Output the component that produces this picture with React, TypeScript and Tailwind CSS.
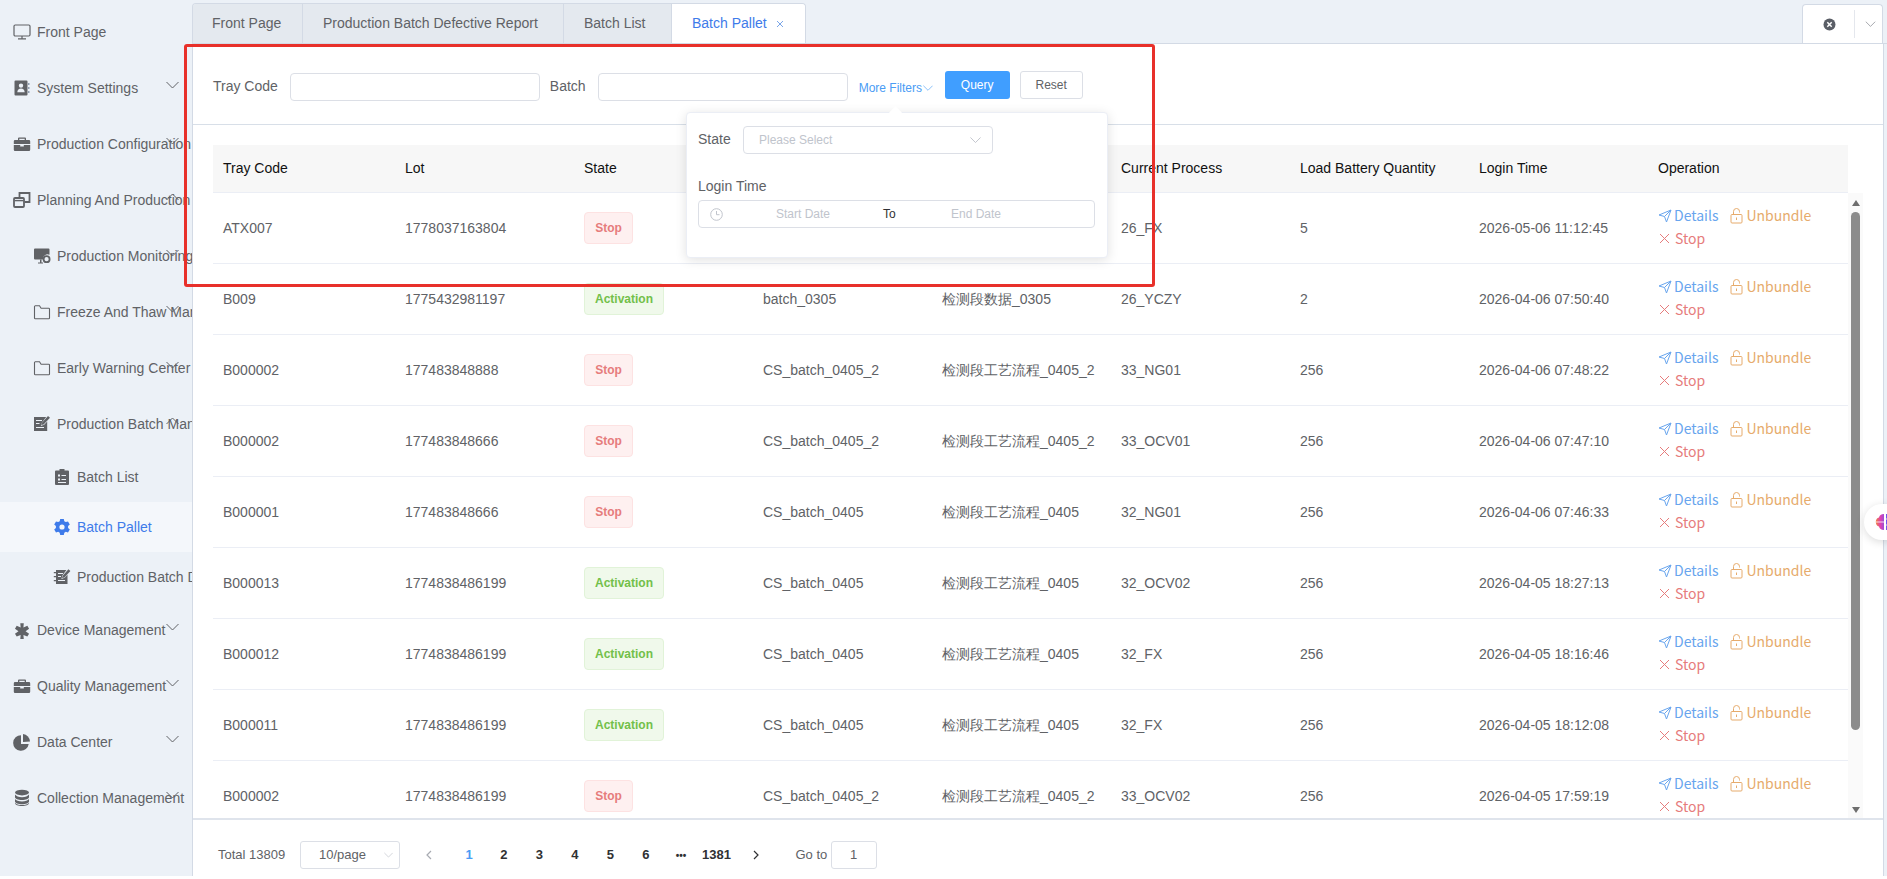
import React from "react";

const ICON = "#606266";

function Chevron({ up = false, className = "", color = "#606266" }: { up?: boolean; className?: string; color?: string }) {
  return (
    <svg width="13" height="8" viewBox="0 0 13 8" fill="none" className={className} stroke={color} strokeWidth="1">
      <path d={up ? "M0.5 7L6.5 1L12.5 7" : "M0.5 1L6.5 7L12.5 1"} />
    </svg>
  );
}

const S = { width: 18, height: 18, viewBox: "0 0 18 18" };

const icons: Record<string, React.ReactNode> = {
  monitor: (
    <svg {...S} fill="none" stroke={ICON} strokeWidth="1.2">
      <rect x="1" y="2" width="16" height="11" rx="1.2" />
      <path d="M9 13v2.6M5 15.8h8" />
    </svg>
  ),
  contact: (
    <svg {...S} fill={ICON}>
      <path fillRule="evenodd" d="M2.5 1.500h11a1 1 0 0 1 1 1v13a1 1 0 0 1-1 1h-11a1 1 0 0 1-1-1v-13a1 1 0 0 1 1-1zM8 4.400a2.200 2.200 0 1 0 0 4.400 2.200 2.200 0 0 0 0-4.400zM4.300 13.200h7.400c0-2.100-1.600-3.600-3.700-3.600s-3.700 1.500-3.700 3.600z" />
      <path d="M15.200 4h1.200v2h-1.200zM15.200 8h1.200v2h-1.200zM15.200 12h1.200v2h-1.200z" fill="#7a8aa0" />
    </svg>
  ),
  briefcase: (
    <svg {...S} fill={ICON}>
      <path fillRule="evenodd" d="M6 2.500h6a1 1 0 0 1 1 1V5h3a1.200 1.200 0 0 1 1.200 1.200V9H.8V6.200A1.200 1.200 0 0 1 2 5h3V3.500a1 1 0 0 1 1-1zM6.300 3.800V5h5.400V3.800z" />
      <path d="M.8 10h6.400v1.400h3.600V10h6.400v4.800a1.200 1.200 0 0 1-1.200 1.200H2a1.200 1.200 0 0 1-1.200-1.200z" />
    </svg>
  ),
  windows: (
    <svg {...S} fill="none" stroke={ICON} strokeWidth="1.8">
      <rect x="1" y="7" width="10" height="9" rx="1" />
      <path d="M6.500 6.500V2h10v9h-5" />
      <path d="M1.500 9.600h9" strokeWidth="1.400" />
    </svg>
  ),
  screen: (
    <svg {...S} fill={ICON}>
      <path d="M2 1.500h13.500a1 1 0 0 1 1 1v5.300A4.600 4.600 0 0 0 10 12.500H2a1 1 0 0 1-1-1v-9a1 1 0 0 1 1-1z" />
      <path d="M5 15.500h5v1H5zM7 12.500h1.500v3H7z" />
      <circle cx="13.600" cy="12.200" r="3" fill="none" stroke={ICON} strokeWidth="1.800" />
    </svg>
  ),
  folder: (
    <svg {...S} fill="none" stroke={ICON} strokeWidth="1.100">
      <path d="M1.500 15V3.600a.8.8 0 0 1 .8-.8h4.200l1.600 2.400h7.600a.8.8 0 0 1 .8.8V15a.8.8 0 0 1-.8.8H2.300a.8.8 0 0 1-.8-.8z" />
    </svg>
  ),
  edit: (
    <svg {...S} fill={ICON}>
      <path fillRule="evenodd" d="M1 2h12.200L9 7.600 7.800 11l3.400-1.200 3-3.200V16H1zM3 5v1h6V5zM3 8v1h3.500V8zM3 12v1h8v-1z" />
      <path d="M15 1l2 1.800-6.400 6.600-2.400.7.7-2.400z" />
    </svg>
  ),
  clipboard: (
    <svg {...S} fill={ICON}>
      <path fillRule="evenodd" d="M6.500 1h5v1.600H15a1 1 0 0 1 1 1V16a1 1 0 0 1-1 1H3a1 1 0 0 1-1-1V3.600a1 1 0 0 1 1-1h3.500zM5 6.500v2h2v-2zM8.500 7v1H13V7zM5 10.500v2h2v-2zM8.500 11v1H13v-1zM5 14v1h8v-1z" />
    </svg>
  ),
  gear: (
    <svg {...S} fill="#3e7bea">
      <path fillRule="evenodd" d="M7.200 1h3.600l.5 2.200 1.500.9 2.200-.7 1.800 3.100-1.700 1.500v1.900l1.700 1.500-1.800 3.100-2.200-.7-1.500.9-.5 2.300H7.200l-.5-2.300-1.500-.9-2.200.7-1.800-3.100 1.700-1.500V8L1.200 6.500 3 3.400l2.200.7 1.500-.9zM9 6.400a2.600 2.600 0 1 0 0 5.200 2.600 2.600 0 0 0 0-5.200z" />
    </svg>
  ),
  notebook: (
    <svg {...S} fill={ICON}>
      <path fillRule="evenodd" d="M3 2h10.400L9.400 7.600 8.400 11l3.300-1.200 2.800-3V16H3zM5 5v1h5V5zM5 8v1h3V8zM5 12v1h7v-1z" />
      <path d="M.8 4h3.400v1.300H.8zM.8 8h3.400v1.300H.8zM.8 12h3.400v1.300H.8z" />
      <path d="M15.400 1.200l2 1.700-6 6.500-2.400.7.7-2.400z" />
    </svg>
  ),
  asterisk: (
    <svg {...S} fill={ICON}>
      <path d="M7 1.500h4l-.4 4.900 4.500-2 2 3.400-4 2.800 4 2.800-2 3.400-4.500-2 .4 4.900H7l.4-4.900-4.500 2-2-3.400 4-2.800-4-2.800 2-3.400 4.500 2z" transform="translate(1.200 1) scale(.87)" />
    </svg>
  ),
  pie: (
    <svg {...S} fill={ICON}>
      <path d="M8 2.200A7.800 7.800 0 1 0 15.700 11H8z" />
      <path d="M10 1a7.800 7.800 0 0 1 7 7.400l-7 .7z" />
    </svg>
  ),
  db: (
    <svg {...S} fill={ICON}>
      <ellipse cx="9" cy="3.600" rx="7" ry="2.800" />
      <path d="M2 5.600c1 1.700 3.700 2.600 7 2.600s6-.9 7-2.600v2.600c0 1.600-3.100 2.800-7 2.800S2 9.800 2 8.200z" />
      <path d="M2 10c1 1.700 3.700 2.400 7 2.400s6-.7 7-2.400v2.400c0 1.600-3.100 2.800-7 2.800s-7-1.200-7-2.800z" />
      <path d="M2 13.800c1 1.600 3.700 2.300 7 2.300s6-.7 7-2.300v.4c0 1.600-3.100 2.800-7 2.800s-7-1.200-7-2.800z" />
    </svg>
  ),
};

type Item = { label: string; icon: string; level: 1 | 2 | 3; chevron?: "down" | "up"; active?: boolean };

const menu: Item[] = [
  { label: "Front Page", icon: "monitor", level: 1 },
  { label: "System Settings", icon: "contact", level: 1, chevron: "down" },
  { label: "Production Configuration", icon: "briefcase", level: 1, chevron: "down" },
  { label: "Planning And Production", icon: "windows", level: 1, chevron: "up" },
  { label: "Production Monitoring", icon: "screen", level: 2, chevron: "down" },
  { label: "Freeze And Thaw Management", icon: "folder", level: 2, chevron: "down" },
  { label: "Early Warning Center", icon: "folder", level: 2, chevron: "down" },
  { label: "Production Batch Management", icon: "edit", level: 2, chevron: "up" },
  { label: "Batch List", icon: "clipboard", level: 3 },
  { label: "Batch Pallet", icon: "gear", level: 3, active: true },
  { label: "Production Batch Defective Report", icon: "notebook", level: 3 },
  { label: "Device Management", icon: "asterisk", level: 1, chevron: "down" },
  { label: "Quality Management", icon: "briefcase", level: 1, chevron: "down" },
  { label: "Data Center", icon: "pie", level: 1, chevron: "down" },
  { label: "Collection Management", icon: "db", level: 1, chevron: "down" },
];

function MenuRow({ item }: { item: Item }) {
  const pad = item.level === 1 ? "pl-[13px]" : item.level === 2 ? "pl-[33px]" : "pl-[53px]";
  const h = item.level === 3 ? "h-[50px]" : "h-[56px]";
  const tone = item.active ? "bg-[#f4f7fb] text-[#3e7bea]" : "text-[#606266]";
  return (
    <div className={`relative flex items-center whitespace-nowrap overflow-hidden ${h} ${pad} ${tone}`}>
      <span className="flex w-[18px] h-[18px] shrink-0 mr-[6px]">{icons[item.icon]}</span>
      <span>{item.label}</span>
      {item.chevron && (
        <Chevron up={item.chevron === "up"} className="absolute left-[166px] top-[calc(50%-7px)]" />
      )}
    </div>
  );
}

function Sidebar() {
  return (
    <aside className="w-[192px] shrink-0 pt-[4px] text-[14px] overflow-hidden">
      {menu.map((m) => (
        <MenuRow key={m.label} item={m} />
      ))}
    </aside>
  );
}

function Tabs() {
  const tab = "h-full flex items-center pl-[20px] border-r border-[#d3dae5] text-[#606266] bg-[#e4e9ef]";
  return (
    <div className="h-[44px] shrink-0 pt-[3px] flex justify-between items-stretch border-b border-[#d3dae5] text-[14px]">
      <div className="flex rounded-t-[4px] border border-b-0 border-[#d3dae5] overflow-hidden">
        <div className="h-full flex items-center pl-[19px] border-r border-[#d3dae5] text-[#606266] bg-[#e4e9ef] w-[110px]">Front Page</div>
        <div className={`${tab} w-[261px]`}>Production Batch Defective Report</div>
        <div className={`${tab} w-[108px]`}>Batch List</div>
        <div className="h-full w-[133px] flex items-center pl-[20px] bg-white text-[#3e7bea]">
          Batch Pallet
          <svg width="8" height="8" viewBox="0 0 8 8" className="ml-[9px]" stroke="#7aa5e8" fill="none">
            <path d="M1 1l6 6M7 1L1 7" />
          </svg>
        </div>
      </div>
      <div className="w-[81px] mr-[4px] mt-[1px] flex items-center bg-white rounded-t-[4px] border border-b-0 border-[#d3dae5]">
        <div className="w-[52px] h-[28px] flex items-center justify-center border-r border-[#e4e7ed]">
          <svg width="13" height="13" viewBox="0 0 13 13" className="ml-[2px]">
            <circle cx="6.500" cy="6.500" r="6" fill="#5a5e66" />
            <path d="M4.300 4.300l4.400 4.400M8.700 4.300l-4.400 4.400" stroke="#fff" strokeWidth="1.500" />
          </svg>
        </div>
        <Chevron className="ml-[9px] scale-[.8]" color="#909399" />
      </div>
    </div>
  );
}

function Filters() {
  return (
    <div className="h-[81px] shrink-0 border-b border-[#d8dfe8] pl-[20px] pt-[29px] flex items-start text-[14px] text-[#606266]">
      <span className="leading-[27px] mr-[12px]">Tray Code</span>
      <div className="w-[250px] h-[28px] border border-[#dcdfe6] rounded-[4px] bg-white" />
      <span className="leading-[27px] ml-[10px] mr-[12px]">Batch</span>
      <div className="w-[250px] h-[28px] border border-[#dcdfe6] rounded-[4px] bg-white" />
      <div className="ml-[11px] flex items-center text-[12px] text-[#4a9cf5] h-[28px] mt-[1px] w-[76px] shrink-0">
        More Filters
        <Chevron color="#6aaef7" className="ml-[1px] w-[10px]" />
      </div>
      <button className="ml-[10px] -mt-[2px] w-[65px] h-[28px] rounded-[3px] bg-[#409eff] text-white text-[12px]">Query</button>
      <button className="ml-[10px] -mt-[2px] w-[63px] h-[28px] rounded-[3px] border border-[#dcdfe6] bg-white text-[#606266] text-[12px]">Reset</button>
    </div>
  );
}

type Row = [string, string, "Stop" | "Activation", string, string, string, string, string];

const F = "检测段工艺流程_0405";
const F2 = "检测段工艺流程_0405_2";
const rows: Row[] = [
  ["ATX007", "1778037163804", "Stop", "batch_0305", "检测段数据_0305", "26_FX", "5", "2026-05-06 11:12:45"],
  ["B009", "1775432981197", "Activation", "batch_0305", "检测段数据_0305", "26_YCZY", "2", "2026-04-06 07:50:40"],
  ["B000002", "177483848888", "Stop", "CS_batch_0405_2", F2, "33_NG01", "256", "2026-04-06 07:48:22"],
  ["B000002", "177483848666", "Stop", "CS_batch_0405_2", F2, "33_OCV01", "256", "2026-04-06 07:47:10"],
  ["B000001", "177483848666", "Stop", "CS_batch_0405", F, "32_NG01", "256", "2026-04-06 07:46:33"],
  ["B000013", "1774838486199", "Activation", "CS_batch_0405", F, "32_OCV02", "256", "2026-04-05 18:27:13"],
  ["B000012", "1774838486199", "Activation", "CS_batch_0405", F, "32_FX", "256", "2026-04-05 18:16:46"],
  ["B000011", "1774838486199", "Activation", "CS_batch_0405", F, "32_FX", "256", "2026-04-05 18:12:08"],
  ["B000002", "1774838486199", "Stop", "CS_batch_0405_2", F2, "33_OCV02", "256", "2026-04-05 17:59:19"],
];

const GRID = "grid grid-cols-[182px_179px_179px_179px_179px_179px_179px_179px_200px] items-center";

function Tag({ state }: { state: "Stop" | "Activation" }) {
  const stop = state === "Stop";
  return (
    <span
      className={`inline-flex items-center justify-center h-[32px] rounded-[4px] border text-[12px] font-bold ${
        stop ? "w-[49px] bg-[#fef0f0] border-[#fde2e2] text-[#e67c7c]" : "w-[80px] bg-[#f0f9eb] border-[#e1f3d8] text-[#72c04a]"
      }`}
    >
      {state}
    </span>
  );
}

function Ops() {
  return (
    <div className="pb-[2px] text-[14px] leading-[23px] font-['Noto_Sans_CJK_SC','Noto_Sans',sans-serif]">
      <div className="flex items-center">
        <svg width="14" height="14" viewBox="0 0 14 14" fill="none" stroke="#68a5ee" strokeWidth="1" className="mr-[2px]">
          <path d="M13 1L1 6l5.500 1.500L8.500 13z M13 1L6.500 7.500" />
        </svg>
        <span className="text-[#68a5ee]">Details</span>
        <svg width="13" height="16" viewBox="0 0 13 16" fill="none" stroke="#e6ab6c" strokeWidth="1" className="ml-[12px] mr-[3px]">
          <rect x="1" y="6.500" width="11" height="8.500" rx="1" />
          <path d="M3.500 6.500V3.500a3 3 0 0 1 6 0v1M6.500 9.500v2.500" />
        </svg>
        <span className="text-[#e6ab6c]">Unbundle</span>
      </div>
      <div className="flex items-center">
        <svg width="11" height="11" viewBox="0 0 11 11" fill="none" stroke="#e67c7c" strokeWidth="1" className="ml-[1px] mr-[5px]">
          <path d="M1 1l9 9M10 1l-9 9" />
        </svg>
        <span className="text-[#e67c7c]">Stop</span>
      </div>
    </div>
  );
}

function Table() {
  const heads = ["Tray Code", "Lot", "State", "Batch", "Process Flow", "Current Process", "Load Battery Quantity", "Login Time", "Operation"];
  return (
    <div className="flex-1 min-h-0 flex flex-col pt-[20px] pl-[20px] overflow-hidden text-[14px]">
      <div className={`${GRID} w-[1635px] h-[48px] shrink-0 bg-[#f7f7f7] border-b border-[#ebeef5] text-[#111]`}>
        {heads.map((h) => (
          <div key={h} className="pl-[10px] whitespace-nowrap">{h}</div>
        ))}
      </div>
      <div className="flex-1 min-h-0 flex overflow-hidden">
        <div className="w-[1635px] shrink-0 overflow-hidden text-[#606266]">
          {rows.map((r, i) => (
            <div key={i} className={`${GRID} h-[71px] border-b border-[#ebeef5]`}>
              <div className="pl-[10px]">{r[0]}</div>
              <div className="pl-[10px]">{r[1]}</div>
              <div className="pl-[10px] flex"><Tag state={r[2]} /></div>
              <div className="pl-[10px]">{r[3]}</div>
              <div className="pl-[10px] whitespace-nowrap">{r[4]}</div>
              <div className="pl-[10px]">{r[5]}</div>
              <div className="pl-[10px]">{r[6]}</div>
              <div className="pl-[10px]">{r[7]}</div>
              <div className="pl-[10px]"><Ops /></div>
            </div>
          ))}
        </div>
        <div className="w-[15px] shrink-0 bg-[#fafafa] flex flex-col items-center pt-[7px] pb-[5px]">
          <div className="w-0 h-0 border-x-[4px] border-x-transparent border-b-[6px] border-b-[#6e6e6e]" />
          <div className="w-[9px] h-[518px] mt-[6px] rounded-full bg-[#8c8c8c]" />
          <div className="flex-1" />
          <div className="w-0 h-0 border-x-[4px] border-x-transparent border-t-[6px] border-t-[#6e6e6e]" />
        </div>
      </div>
    </div>
  );
}

function Pager() {
  const pages = ["2", "3", "4", "5", "6"];
  return (
    <div className="h-[58px] shrink-0 border-t-2 border-[#dfe4ec] pt-[21px] pl-[25px] text-[13px] text-[#606266]">
      <div className="flex items-center h-[28px]">
        <span className="w-[82px] shrink-0 whitespace-nowrap">Total 13809</span>
        <div className="w-[100px] h-[28px] border border-[#dcdfe6] rounded-[3px] flex items-center justify-between pl-[18px] pr-[6px]">
          10/page
          <Chevron color="#c0c4cc" className="w-[9px]" />
        </div>
        <div className="w-[52px] shrink-0 pl-[25px]">
          <svg width="7" height="10" viewBox="0 0 7 10" fill="none" stroke="#a8abb2" strokeWidth="1.200"><path d="M6 1L2 5l4 4" /></svg>
        </div>
        <div className="flex items-center font-bold text-[#303133]">
          <span className="w-[34px] text-center text-[#4a9cf5]">1</span>
          {pages.map((p) => (
            <span key={p} className="w-[35.500px] text-center">{p}</span>
          ))}
          <span className="w-[35px] text-center text-[10px]">•••</span>
          <span className="w-[36px] text-center">1381</span>
        </div>
        <div className="w-[61px] shrink-0 pl-[18px]">
          <svg width="7" height="10" viewBox="0 0 7 10" fill="none" stroke="#303133" strokeWidth="1.200"><path d="M1 1l4 4-4 4" /></svg>
        </div>
        <span className="w-[35px] shrink-0 whitespace-nowrap">Go to</span>
        <div className="w-[46px] h-[28px] flex items-center justify-center border border-[#dcdfe6] rounded-[3px]">1</div>
      </div>
    </div>
  );
}

function Popover() {
  return (
    <div className="absolute left-[493px] top-[68px] w-[422px] h-[146px] bg-white rounded-[4px] shadow-[0_2px_12px_rgba(0,0,0,0.12)] border border-[#ebeef5] text-[14px] text-[#606266] px-[11px] pt-[13px]">
      <div className="absolute -top-[5px] left-[204px] w-[9px] h-[9px] rotate-45 bg-white" />
      <div className="flex items-center h-[28px]">
        <span className="w-[45px] pb-[2px]">State</span>
        <div className="w-[250px] h-[28px] border border-[#dcdfe6] rounded-[4px] flex items-center justify-between pl-[15px] pr-[11px] text-[12px] text-[#c0c4cc]">
          Please Select
          <Chevron color="#b9bdc5" className="w-[11px]" />
        </div>
      </div>
      <div className="mt-[22px] leading-[20px]">Login Time</div>
      <div className="mt-[4px] w-[397px] h-[28px] border border-[#dcdfe6] rounded-[4px] flex items-center pl-[11px] text-[12px] text-[#c0c4cc]">
        <svg width="13" height="13" viewBox="0 0 13 13" fill="none" stroke="#c0c4cc" strokeWidth="1"><circle cx="6.500" cy="6.500" r="5.800" /><path d="M6.500 3v3.700h3" /></svg>
        <span className="w-[130px] pl-[53px] whitespace-nowrap">Start Date</span>
        <span className="w-[76px] ml-[4px] pl-[26px] text-[#303133]">To</span>
        <span className="pl-[18px] whitespace-nowrap">End Date</span>
      </div>
    </div>
  );
}

export default function App() {
  return (
    <div className="relative w-[1887px] h-[879px] overflow-hidden bg-white font-['Liberation_Sans',Arial,sans-serif]">
      <div className="h-[876px] flex bg-[#ecf1f7]">
        <Sidebar />
        <main className="flex-1 min-w-0 h-[876px] flex flex-col">
          <Tabs />
          <div className="relative flex-1 min-h-0 flex flex-col bg-white border-l border-r border-[#d3dae5] mr-[3px]">
            <Filters />
            <Table />
            <Pager />
            <Popover />
          </div>
        </main>
      </div>
      <div className="h-[3px] bg-white" />
      <div className="absolute left-[1864px] top-[504px] w-[40px] h-[36px] rounded-full bg-white shadow-[0_2px_8px_rgba(0,0,0,0.14)] flex items-center pl-[11px]">
        <svg width="20" height="18" viewBox="0 0 20 18">
          <defs>
            <linearGradient id="brain" x1="0" y1="0" x2="1" y2="0">
              <stop offset="0" stopColor="#f0803c" />
              <stop offset="0.25" stopColor="#e040b0" />
              <stop offset="0.6" stopColor="#6a55f0" />
              <stop offset="1" stopColor="#4a7af0" />
            </linearGradient>
          </defs>
          <path d="M9 1C6 1 4.500 2.500 4 4.500 2 5 .8 6.800.8 9S2 13 4 13.500C4.500 15.500 6 17 9 17zM11 1c3 0 4.500 1.500 5 3.500 2 .5 3.200 2.300 3.200 4.500s-1.200 4-3.200 4.500c-.5 2-2 3.500-5 3.500z" fill="url(#brain)" />
          <path d="M1 9h8M11 6h8M11 12h8" stroke="#fff" strokeWidth=".8" />
        </svg>
      </div>
      <div className="absolute left-[184px] top-[44px] w-[971px] h-[243px] rounded-[3px] border-[3px] border-[#e8302a] pointer-events-none" />
    </div>
  );
}
